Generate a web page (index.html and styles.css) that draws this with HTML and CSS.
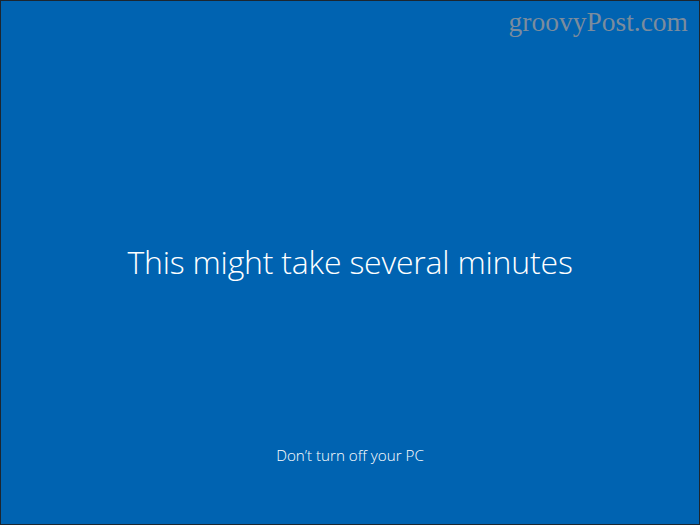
FILE: index.html
```html
<!DOCTYPE html>
<html>
<head>
<meta charset="utf-8">
<link rel="stylesheet" href="styles.css">
</head>
<body>
<div class="screen">
  <div class="watermark">groovyPost.com</div>
  <h1 class="title">This might take several minutes</h1>
  <p class="note">Don’t turn off your PC</p>
</div>
</body>
</html>
```
FILE: styles.css
```css
html, body { margin: 0; padding: 0; }
body { background: #0063b1; }
.screen {
  position: relative;
  box-sizing: border-box;
  width: 700px;
  height: 525px;
  border: 1px solid #1c2630;
  background: #0063b1;
  color: #ffffff;
  display: flex;
  flex-direction: column;
  align-items: center;
  font-family: "Open Sans", "Noto Sans", sans-serif;
}
.watermark {
  position: absolute;
  top: 5px;
  right: 11px;
  font-family: "Liberation Serif", serif;
  font-size: 27.5px;
  color: #7b8c9d;
}
.title {
  margin: 239px 0 0;
  font-weight: 300;
  font-size: 32px;
  line-height: 44px;
  letter-spacing: -0.2px;
}
.note {
  margin: auto 0 59px;
  font-weight: 300;
  font-size: 15.2px;
  line-height: 20px;
}
```
